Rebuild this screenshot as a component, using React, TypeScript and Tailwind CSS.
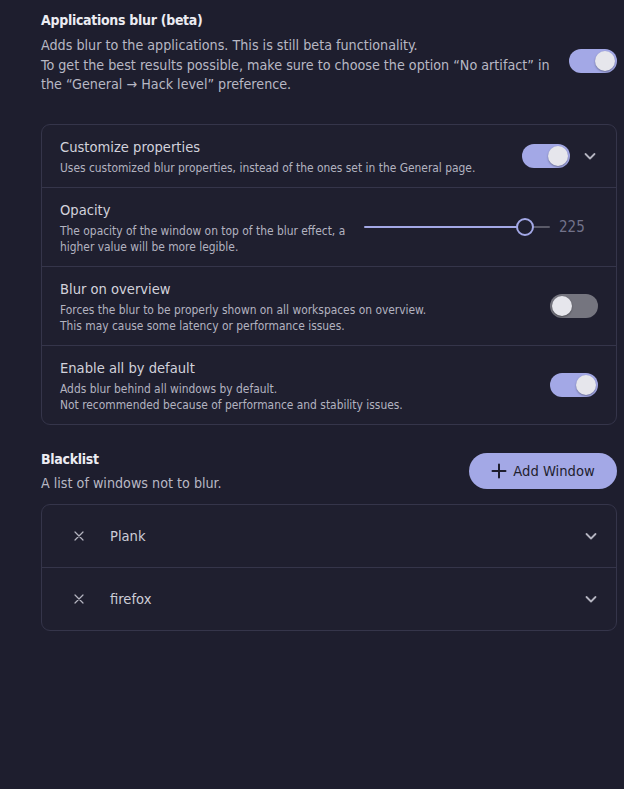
import React from "react";

const font = { fontFamily: '"DejaVu Sans Condensed", "Liberation Sans Narrow", Roboto, sans-serif' };

function Toggle({ on }: { on: boolean }) {
  return (
    <div
      className={
        "relative h-[24px] w-[48px] shrink-0 rounded-full " +
        (on ? "bg-[#a3a8e6]" : "bg-[#75757f]")
      }
    >
      <div
        className={
          "absolute top-[2px] h-[20px] w-[20px] rounded-full bg-[#e6e6ec] shadow-[0_1px_2px_rgba(0,0,0,0.35)] " +
          (on ? "right-[2px]" : "left-[2px]")
        }
      />
    </div>
  );
}

function Chevron() {
  return (
    <svg width="14" height="14" viewBox="0 0 14 14" className="shrink-0">
      <path d="M2.5 5 L7 9.5 L11.5 5" fill="none" stroke="#b4b4c0" strokeWidth="1.8" strokeLinecap="round" strokeLinejoin="round" />
    </svg>
  );
}

function Cross() {
  return (
    <svg width="10" height="10" viewBox="0 0 10 10" className="shrink-0">
      <path d="M1 1 L9 9 M9 1 L1 9" fill="none" stroke="#b4b4c0" strokeWidth="1.2" strokeLinecap="round" />
    </svg>
  );
}

function Row({
  title,
  desc,
  right,
  first,
}: {
  title: string;
  desc: React.ReactNode;
  right: React.ReactNode;
  first?: boolean;
}) {
  return (
    <div
      className={
        "flex items-center justify-between pl-[18px] pr-[18px] pt-[12px] pb-[11px] " +
        (first ? "" : "border-t border-[#35354a]")
      }
    >
      <div className="flex flex-col">
        <div className="text-[14.6px] leading-[20px] text-[#d2d2dc]">{title}</div>
        <div className="mt-[3px] text-[11.9px] leading-[16px] text-[#b3b3c0]">{desc}</div>
      </div>
      {right}
    </div>
  );
}

export default function App() {
  return (
    <div style={font} className="min-h-[789px] w-[624px] bg-[#1e1e2e] pl-[41px] pr-[7px] pt-[10px]">
      <div className="flex items-start justify-between">
        <div className="flex flex-col">
          <div className="text-[14px] font-bold leading-[20px] tracking-[-0.3px] text-[#ececf2]">Applications blur (beta)</div>
          <div className="mt-[6px] text-[14.2px] leading-[19.5px] text-[#b8b8c4]">
            Adds blur to the applications. This is still beta functionality.
            <br />
            To get the best results possible, make sure to choose the option “No artifact” in
            <br />
            the “General → Hack level” preference.
          </div>
        </div>
        <div className="mt-[39px]">
          <Toggle on />
        </div>
      </div>

      <div className="mt-[29px] rounded-[9px] border border-[#35354a] bg-[#1f1f2f]">
        <Row
          first
          title="Customize properties"
          desc="Uses customized blur properties, instead of the ones set in the General page."
          right={
            <div className="flex items-center gap-[13px] pr-[1px]">
              <Toggle on />
              <Chevron />
            </div>
          }
        />
        <Row
          title="Opacity"
          desc={
            <>
              The opacity of the window on top of the blur effect, a
              <br />
              higher value will be more legible.
            </>
          }
          right={
            <div className="flex items-center gap-[9px]">
              <div className="relative h-[18px] w-[186px]">
                <div className="absolute left-0 top-[8px] h-[2px] w-[160px] rounded-full bg-[#a3a8e6]" />
                <div className="absolute left-[160px] top-[8px] h-[2px] w-[26px] rounded-full bg-[#5a5a68]" />
                <div className="absolute left-[152px] top-0 h-[18px] w-[18px] rounded-full border-2 border-[#a3a8e6] bg-[#1f1f2f]" />
              </div>
              <div className="w-[39px] text-[15px] leading-[20px] text-[#72728a]">225</div>
            </div>
          }
        />
        <Row
          title="Blur on overview"
          desc={
            <>
              Forces the blur to be properly shown on all workspaces on overview.
              <br />
              This may cause some latency or performance issues.
            </>
          }
          right={<Toggle on={false} />}
        />
        <Row
          title="Enable all by default"
          desc={
            <>
              Adds blur behind all windows by default.
              <br />
              Not recommended because of performance and stability issues.
            </>
          }
          right={<Toggle on />}
        />
      </div>

      <div className="mt-[24px] flex items-start justify-between">
        <div className="flex flex-col">
          <div className="text-[14px] font-bold leading-[20px] tracking-[-0.3px] text-[#ececf2]">Blacklist</div>
          <div className="mt-[5px] text-[14.2px] leading-[19.5px] text-[#b8b8c4]">A list of windows not to blur.</div>
        </div>
        <button className="mt-[4px] flex h-[36px] w-[148px] items-center justify-center gap-[6px] rounded-full bg-[#a3a8e6] text-[14.6px] text-[#1e1e2e]">
          <svg width="16" height="16" viewBox="0 0 16 16">
            <path d="M8 1.5 V14.5 M1.5 8 H14.5" stroke="#1e1e2e" strokeWidth="2" strokeLinecap="round" />
          </svg>
          Add Window
        </button>
      </div>

      <div className="mt-[11px] rounded-[9px] border border-[#35354a] bg-[#1f1f2f]">
        {["Plank", "firefox"].map((name, i) => (
          <div
            key={name}
            className={
              "flex h-[62px] items-center pl-[32px] pr-[18px] " + (i > 0 ? "border-t border-[#35354a] h-[63px]" : "")
            }
          >
            <Cross />
            <div className="ml-[26px] flex-1 text-[14.6px] text-[#cdcdd7]">{name}</div>
            <Chevron />
          </div>
        ))}
      </div>
    </div>
  );
}
